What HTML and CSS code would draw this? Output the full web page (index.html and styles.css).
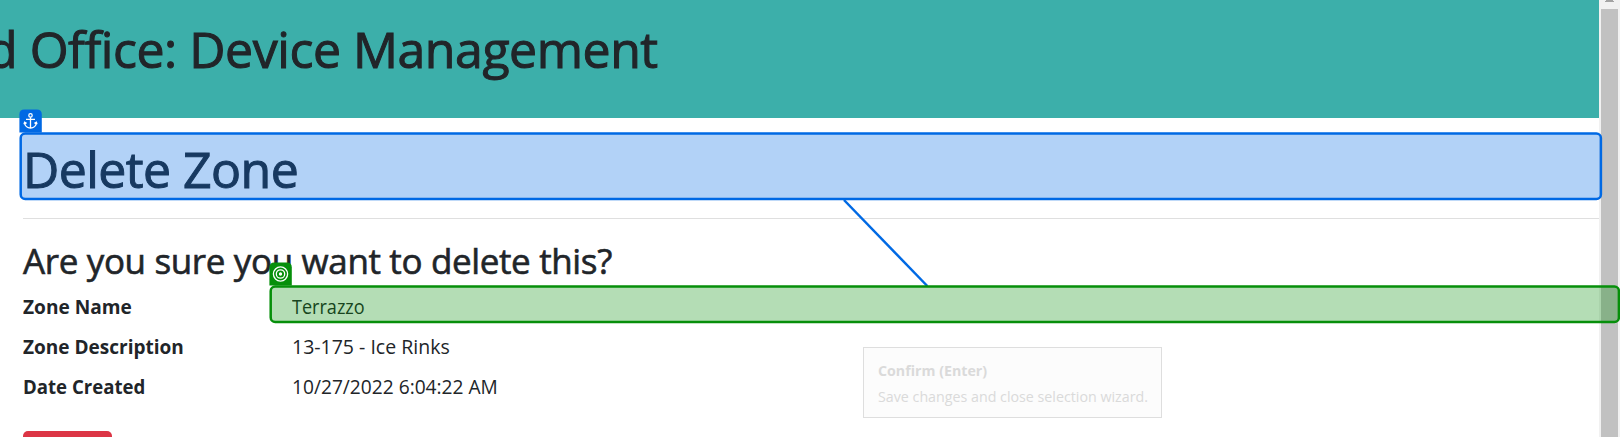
FILE: index.html
```html
<!DOCTYPE html>
<html lang="en">
<head>
<meta charset="utf-8">
<title>Delete Zone</title>
<link rel="stylesheet" href="styles.css">
</head>
<body>
<div class="window">
  <div class="page">
    <header class="banner"><h1 class="banner-title">d Office: Device Management</h1></header>
    <main class="content">
      <h1 class="title"><span class="title-text">Delete Zone</span></h1>
      <hr class="rule">
      <h3 class="question"><span class="question-text">Are you sure you want to delete this?</span></h3>
      <dl class="details">
        <dt><span class="k1">Zone Name</span></dt><dd><span class="v1">Terrazzo</span></dd>
        <dt><span class="k2">Zone Description</span></dt><dd><span class="v2">13-175 - Ice Rinks</span></dd>
        <dt><span class="k3">Date Created</span></dt><dd><span class="v3">10/27/2022 6:04:22 AM</span></dd>
      </dl>
      <button class="delete" aria-label="Delete"></button>
    </main>
  </div>
  <div class="scrollbar"><svg class="arrow" width="10" height="2"><path d="M1 0H8V1H9V2H0V1H1Z" fill="#a3a3a3"/></svg><div class="thumb"></div></div>
</div>
<svg class="overlay" width="1620" height="437" viewBox="0 0 1620 437">
  <path d="M844 200L927.3 286" stroke="#0069e4" stroke-width="2.5"/>
  <rect x="20.7" y="133.5" width="1580.2" height="65.5" rx="4.5" fill="#0069e4" fill-opacity=".3" stroke="#0069e4" stroke-width="2.5"/>
  <path d="M19.4 132.4V114.5Q19.4 109.5 24.4 109.5H36.8Q41.8 109.5 41.8 114.5V132.4Z" fill="#0069e4"/>
  <g fill="none" stroke="#fff" stroke-width="1.3">
    <circle cx="30.5" cy="115.4" r="1.7"/>
    <path d="M30.5 117.2V128M26 119.3H35M24.5 122.3C24.7 130 36.3 130 36.5 122.3M24 124.3L24.6 122.2L26.6 123.4M37 124.3L36.4 122.2L34.4 123.4"/>
  </g>
  <rect x="270.7" y="286.6" width="1348.2" height="35.4" rx="4.5" fill="#068f0a" fill-opacity=".3" stroke="#068f0a" stroke-width="2.5"/>
  <path d="M269.4 285.4V267.6Q269.4 262.6 274.4 262.6H286.8Q291.8 262.6 291.8 267.6V285.4Z" fill="#068f0a"/>
  <g fill="none" stroke="#fff" stroke-width="1.3">
    <circle cx="280.5" cy="274" r="7.1"/><circle cx="280.5" cy="274" r="4.2"/><circle cx="280.5" cy="274" r="1" fill="#fff"/>
  </g>
</svg>
<div class="tooltip">
  <strong class="tip-title"><span class="t1">Confirm (Enter)</span></strong>
  <span class="tip-text"><span class="t2">Save changes and close selection wizard.</span></span>
</div>
</body>
</html>
```
FILE: styles.css
```css
* { box-sizing: border-box; }
body { margin: 0; width: 1620px; height: 437px; overflow: hidden; position: relative; background: #fff; color: #212529; font: 20px/30px "Open Sans", "Noto Sans", sans-serif; }
.window { display: flex; height: 437px; }
.page { flex: 1; height: 437px; overflow: hidden; }
.banner { height: 118px; padding-top: 19px; background: #3cafaa; overflow: hidden; }
h1, h3, dl, dd { margin: 0; }
h1 { font-size: 50px; line-height: 60px; font-weight: 500; white-space: nowrap; -webkit-text-stroke: 1px #212529; }
.banner-title { margin-left: -13px; letter-spacing: -0.46px; }
.content { padding: 21px 0 0 23px; }
.title { letter-spacing: -0.56px; }
.rule { margin: 19px 0 21px; border: 0; height: 1px; background: #dfdfdf; }
.question { font-size: 35px; line-height: 42px; font-weight: 500; letter-spacing: -0.36px; white-space: nowrap; -webkit-text-stroke: 0.6px #212529; }
.details { display: grid; grid-template-columns: 269px 1fr; row-gap: 10px; margin-top: 10px; }
.details dt { font-weight: 700; }
.details span, .title-text, .question-text, .t1, .t2 { display: inline-block; white-space: nowrap; transform-origin: left; }
.k1 { transform: scaleX(0.955); }
.k2 { transform: scaleX(0.951); }
.k3 { transform: scaleX(0.93); }
.v1 { transform: scaleX(0.903); }
.v2 { transform: scaleX(0.975); }
.v3 { transform: scaleX(0.958); }
.t1 { transform: scaleX(0.948); }
.t2 { transform: scaleX(0.95); }
.delete { display: block; width: 89px; height: 48px; margin-top: 29px; border: 0; border-radius: 5px; background: #dc3545; }
.scrollbar { width: 21px; height: 437px; background: #f1f1f1; padding: 0 2px; }
.arrow { display: block; margin: 0 0 7px 4px; }
.thumb { height: 428px; background: #c1c1c1; }
.overlay { position: absolute; left: 0; top: 0; }
.tooltip { position: absolute; left: 863px; top: 347px; width: 299px; height: 71px; padding: 9px 14px; border: 1px solid #dedede; background: #fcfcfc; color: #dadada; font-size: 15px; line-height: 26px; display: flex; flex-direction: column; }
```
